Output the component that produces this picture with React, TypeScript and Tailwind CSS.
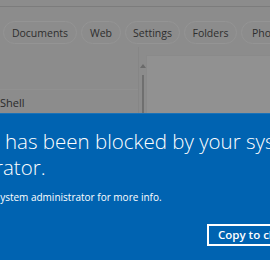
// Dimmed search window behind a "blocked by administrator" banner.

const TABS = [
  { label: "Documents", w: "w-[74px]" },
  { label: "Web", w: "w-[40px]" },
  { label: "Settings", w: "w-[55px]" },
  { label: "Folders", w: "w-[53px]" },
  { label: "Photos", w: "w-[56px]" },
];

export default function App() {
  return (
    <div
      className="w-[270px] h-[260px] overflow-hidden bg-[#8c8c8c] flex flex-col"
      style={{ fontFamily: '"Open Sans", "Noto Sans", sans-serif' }}
    >
      {/* top edge */}
      <div className="h-[7px] shrink-0 border-b border-[#7c7c7c]" />

      {/* filter pills */}
      <div className="flex items-center gap-[4px] pl-[3px] pt-[14px] shrink-0">
        {TABS.map(({ label, w }) => (
          <div
            key={label}
            className={`${w} h-[23px] shrink-0 rounded-full border border-[#949494] flex items-center justify-center pt-[2px] text-[10.5px] text-[#2e2e2e]`}
          >
            {label}
          </div>
        ))}
      </div>

      {/* results area */}
      <div className="flex h-[66px] mt-[3px] shrink-0">
        <div className="w-[139px] flex flex-col justify-end border-r border-[#868686]">
          <div className="h-[24px] flex items-center pt-[4px] text-[11px] text-[#2a2a2a] border-t border-[#909090]">
            Shell
          </div>
        </div>
        <div className="w-[7px] flex flex-col items-center pt-[17px]">
          <div className="w-0 h-0 border-l-[3px] border-r-[3px] border-b-[4px] border-l-transparent border-r-transparent border-b-[#6a6a6a]" />
          <div className="w-[2px] flex-1 bg-[#6f6f6f] mt-[7px]" />
        </div>
        <div className="flex-1 mt-[8px] bg-[#919191] border-t border-l border-[#8a8a8a]" />
      </div>

      {/* blocked banner */}
      <div className="flex-1 bg-[#0063b1] text-white border-t border-[#1a72b8]">
        <div className="pt-[14px] whitespace-nowrap text-[20.5px] leading-[26px] font-light">
          <div className="-ml-[78px]">This app has been blocked by your system</div>
          <div className="-ml-[84px]">administrator.</div>
        </div>
        <div className="mt-[10px] -ml-[67px] whitespace-nowrap text-[10px] leading-[14px]">
          Contact your system administrator for more info.
        </div>
        <div className="flex justify-start pl-[207px] mt-[20px]">
          <div className="h-[22px] border-2 border-white pl-[9px] pr-[12px] flex items-center whitespace-nowrap text-[11.5px] font-semibold">
            Copy to clipboard
          </div>
        </div>
      </div>
    </div>
  );
}
